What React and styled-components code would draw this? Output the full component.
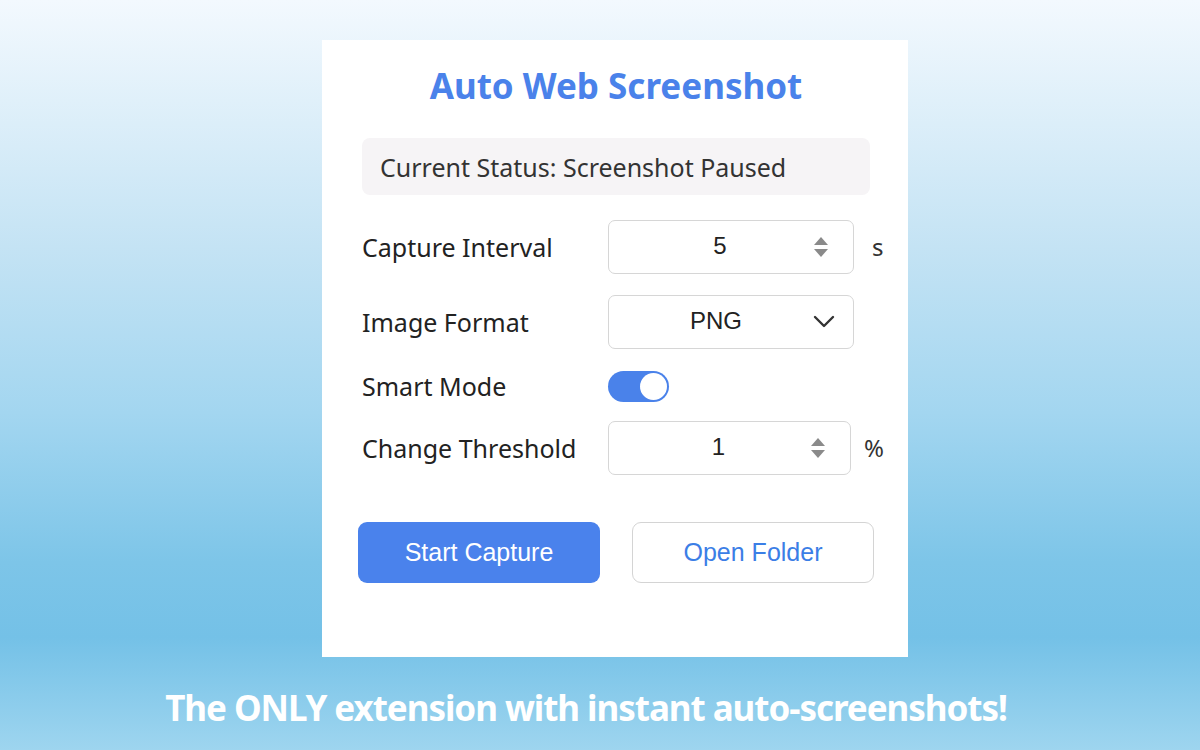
import React, { useState } from 'react';
import styled, { createGlobalStyle } from 'styled-components';

const GlobalStyle = createGlobalStyle`
    html, body {
        margin: 0;
        padding: 0;
    }
    body {
        font-family: "Noto Sans", "Open Sans", sans-serif;
    }
`;

const Page = styled.div`
    width: 1200px;
    height: 750px;
    display: flex;
    flex-direction: column;
    align-items: center;
    padding-top: 40px;
    box-sizing: border-box;
    background: linear-gradient(180deg, #f3f9fe 0%, #c4e3f4 33%, #a3d6f0 55%, #7dc5e8 75%, #74c1e7 85%, #9ed5ef 100%);
`;

const Card = styled.div`
    width: 586px;
    height: 617px;
    margin-left: 30px;
    background: #fff;
    box-sizing: border-box;
    padding: 22px 38px 0 40px;
    display: flex;
    flex-direction: column;
`;

const Title = styled.h1`
    margin: 0;
    text-align: center;
    font-size: 35px;
    font-weight: 700;
    color: #4a82ea;
    line-height: 48px;
`;

const Status = styled.div`
    margin-top: 28px;
    height: 57px;
    background: #f6f4f6;
    border-radius: 8px;
    display: flex;
    align-items: center;
    padding-left: 18px;
    font-size: 25px;
    color: #333;
`;

const Form = styled.div`
    margin-top: 14px;
    display: grid;
    grid-template-columns: 246px 246px auto;
    align-items: center;
`;

const Label = styled.div`
    font-size: 25px;
    color: #222;
    height: ${p => p.h}px;
    display: flex;
    align-items: center;
`;

const Field = styled.div`
    height: 52px;
    width: ${p => p.w || 244}px;
    border: 1px solid #d6d6d6;
    border-radius: 7px;
    display: flex;
    align-items: center;
    font-family: "Liberation Sans", Arial, sans-serif;
    font-size: 24px;
    color: #222;
`;

const Value = styled.span`
    flex: 1;
    text-align: center;
    padding-left: ${p => p.pl}px;
    margin-top: -1px;
`;

const Spinner = styled.div`
    width: 16px;
    margin-right: 24px;
    display: flex;
    flex-direction: column;
    align-items: center;
    gap: 4px;
`;

const Arrow = styled.div`
    width: 0;
    height: 0;
    border-left: 7px solid transparent;
    border-right: 7px solid transparent;
    ${p => p.up ? 'border-bottom: 8px solid #8a8a8a;' : 'border-top: 8px solid #8a8a8a;'}
`;

const Unit = styled.div`
    font-size: 24px;
    color: #333;
    padding-left: ${p => p.pl}px;
`;

const Chevron = styled.svg`
    margin-right: 18px;
`;

const Toggle = styled.button`
    display: block;
    width: 61px;
    height: 31px;
    border-radius: 16px;
    border: none;
    padding: 0;
    background: #4a82ea;
    position: relative;
    cursor: pointer;

    &::after {
        content: "";
        position: absolute;
        top: 2px;
        left: ${p => p.on ? '32px' : '2px'};
        width: 27px;
        height: 27px;
        border-radius: 50%;
        background: #fff;
    }
`;

const Buttons = styled.div`
    margin-top: 40px;
    margin-left: -4px;
    display: flex;
    gap: 32px;
`;

const Button = styled.button`
    width: 242px;
    height: 61px;
    flex-shrink: 0;
    border-radius: 9px;
    font-family: "Liberation Sans", Arial, sans-serif;
    font-size: 25px;
    cursor: pointer;
    background: ${p => p.primary ? '#4a82ec' : '#fff'};
    color: ${p => p.primary ? '#fff' : '#3b7ee6'};
    border: ${p => p.primary ? 'none' : '1px solid #d4d4d4'};
`;

const Tagline = styled.div`
    margin-top: 27px;
    margin-right: 28px;
    font-size: 35px;
    font-weight: 700;
    color: #fff;
    letter-spacing: -1.05px;
`;

const NumberField = ({ value, w }) => (
    <Field w={w}>
        <Value pl={18}>{value}</Value>
        <Spinner>
            <Arrow up />
            <Arrow />
        </Spinner>
    </Field>
);

const App = () => {
    const [smart, setSmart] = useState(true);

    return (
        <>
            <GlobalStyle />
            <Page>
                <Card>
                    <Title>Auto Web Screenshot</Title>
                    <Status>Current Status: Screenshot Paused</Status>
                    <Form>
                        <Label h={75}>Capture Interval</Label>
                        <NumberField value="5" />
                        <Unit pl={18}>s</Unit>

                        <Label h={75}>Image Format</Label>
                        <Field>
                            <Value pl={10}>PNG</Value>
                            <Chevron width="22" height="14" viewBox="0 0 22 14">
                                <path d="M2 2l9 9 9-9" fill="none" stroke="#333" strokeWidth="2.4" strokeLinecap="round" strokeLinejoin="round" />
                            </Chevron>
                        </Field>
                        <span />

                        <Label h={54}>Smart Mode</Label>
                        <div>
                            <Toggle on={smart ? 1 : 0} onClick={() => setSmart(!smart)} />
                        </div>
                        <span />

                        <Label h={69}>Change Threshold</Label>
                        <NumberField value="1" w={241} />
                        <Unit pl={10}>%</Unit>
                    </Form>
                    <Buttons>
                        <Button primary>Start Capture</Button>
                        <Button>Open Folder</Button>
                    </Buttons>
                </Card>
                <Tagline>The ONLY extension with instant auto-screenshots!</Tagline>
            </Page>
        </>
    );
};

export default App;
